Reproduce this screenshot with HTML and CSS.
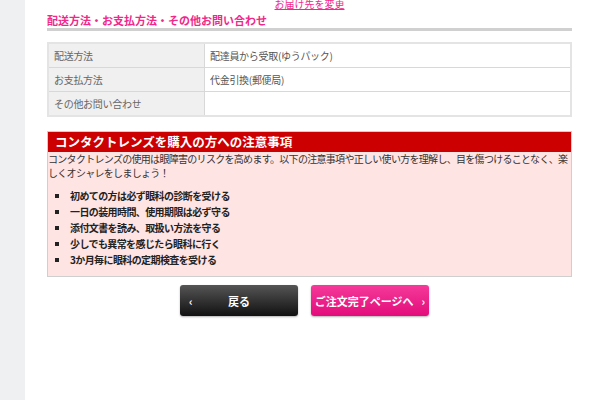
FILE: index.html
```html
<!DOCTYPE html>
<html lang="ja">
<head>
  <meta charset="UTF-8" />
  <title>ご注文内容の確認</title>
  <link rel="stylesheet" href="styles.css">
</head>
<body>
  <div class="side"></div>

  <div class="main">
    <p class="change-link"><a href="#">お届け先を変更</a></p>

    <h2 class="sec-title">配送方法・お支払方法・その他お問い合わせ</h2>

    <table class="info-table">
      <tr>
        <th>配送方法</th>
        <td>配達員から受取(ゆうパック)</td>
      </tr>
      <tr>
        <th>お支払方法</th>
        <td>代金引換(郵便局)</td>
      </tr>
      <tr>
        <th>その他お問い合わせ</th>
        <td></td>
      </tr>
    </table>

    <!-- 注意事項 -->
    <div class="notice">
      <h3>コンタクトレンズを購入の方への注意事項</h3>
      <p>コンタクトレンズの使用は眼障害のリスクを高めます。以下の注意事項や正しい使い方を理解し、目を傷つけることなく、楽<br>しくオシャレをしましょう！</p>
      <ul>
        <li>初めての方は必ず眼科の診断を受ける</li>
        <li>一日の装用時間、使用期限は必ず守る</li>
        <li>添付文書を読み、取扱い方法を守る</li>
        <li>少しでも異常を感じたら眼科に行く</li>
        <li>3か月毎に眼科の定期検査を受ける</li>
      </ul>
    </div>

    <div class="btn-row">
      <a href="#" class="btn btn-back"><span class="arr">‹</span>戻る</a>
      <a href="#" class="btn btn-next">ご注文完了ページへ<span class="arr">›</span></a>
    </div>
  </div>
</body>
</html>
```

FILE: styles.css
```css
html, body {
  margin: 0;
  padding: 0;
  height: 100%;
}

body {
  font-family: "Noto Sans CJK JP", "Noto Sans", sans-serif;
  background: #fff;
  color: #333;
  display: flex;
}

.side {
  width: 25px;
  flex: none;
  background: #eff0f2;
}

.main {
  width: 525px;
  margin-left: 22px;
}

.change-link {
  margin: -2px 0 0;
  text-align: center;
  font-size: 10px;
  line-height: 12px;
}

.change-link a {
  color: #f0288c;
}

.sec-title {
  margin: 3px 0 0;
  font-size: 11px;
  line-height: 14px;
  color: #f0288c;
  padding-bottom: 1px;
  border-bottom: 3px solid #d0d0d0;
}

.info-table {
  width: 100%;
  margin-top: 11px;
  border-collapse: collapse;
  border: 2px solid #e4e4e4;
  font-size: 10px;
  letter-spacing: -0.3px;
  color: #555;
}

.info-table th,
.info-table td {
  height: 23px;
  padding: 0 5px;
  text-align: left;
  font-weight: normal;
  border: 1px solid #d8d8d8;
}

.info-table th {
  width: 145px;
  background: #f0f0f0;
  color: #666;
}

.notice {
  margin-top: 14px;
  background: #ffe4e4;
  border: 1px solid #cfcfcf;
  height: 144px;
}

.notice h3 {
  margin: 0;
  background: #cc0000;
  color: #fff;
  font-size: 12.5px;
  line-height: 20px;
  padding-left: 7px;
}

.notice p {
  margin: 0;
  font-size: 10px;
  line-height: 14px;
  letter-spacing: -0.7px;
  color: #333;
}

.notice ul {
  margin: 8px 0 0;
  padding-left: 22px;
  list-style: square;
}

.notice li {
  font-size: 10px;
  line-height: 16px;
  letter-spacing: -0.6px;
  font-weight: bold;
  color: #222;
}

.btn-row {
  display: flex;
  gap: 13px;
  margin-top: 8px;
  padding-left: 133px;
}

.btn {
  width: 118px;
  height: 31px;
  border-radius: 3px;
  display: flex;
  align-items: center;
  justify-content: center;
  position: relative;
  font-size: 11px;
  font-weight: bold;
  color: #fff;
  text-decoration: none;
  box-shadow: 0 1px 2px rgba(0,0,0,0.3);
}

.btn-back {
  background: linear-gradient(#555, #111);
}

.btn-next {
  background: linear-gradient(#f53a9a, #e30c7b);
}

.btn .arr {
  font-size: 11px;
}

.btn-back .arr {
  position: absolute;
  left: 9px;
}

.btn-next .arr {
  margin-left: 8px;
}
```
